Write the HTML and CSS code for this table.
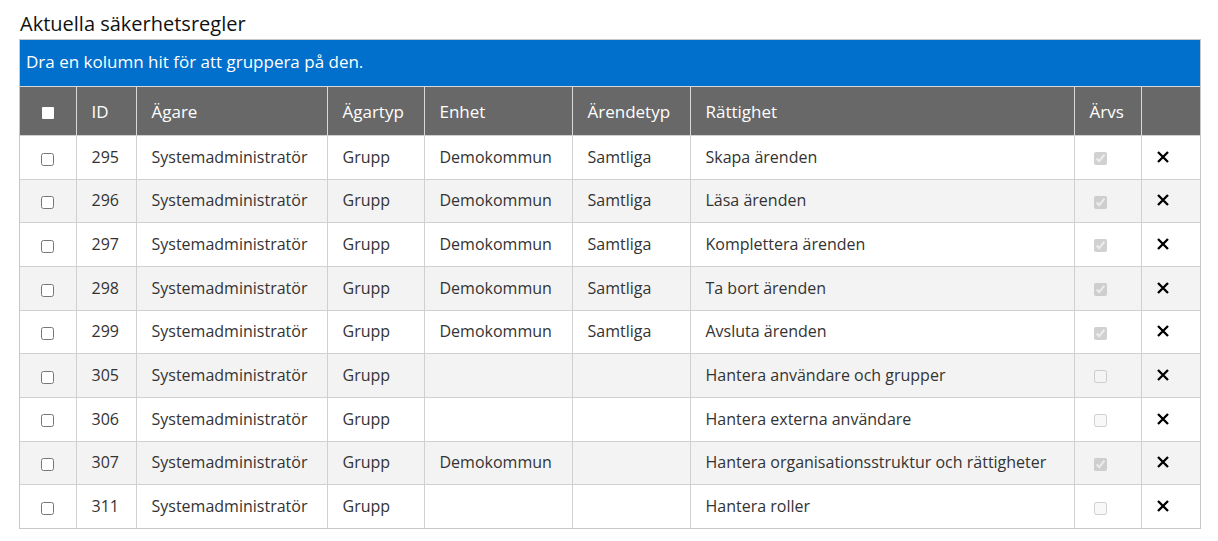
FILE: index.html
```html
<!DOCTYPE html>
<html lang="sv">
<head>
<meta charset="utf-8">
<title>Aktuella säkerhetsregler</title>
<link rel="stylesheet" href="styles.css">
</head>
<body>
<div class="page">
  <h2 class="title">Aktuella säkerhetsregler</h2>
  <div class="grid">
    <div class="group-bar">Dra en kolumn hit för att gruppera på den.</div>
    <table class="rules">
      <colgroup>
        <col class="c-sel"><col class="c-id"><col class="c-owner"><col class="c-otype"><col class="c-unit"><col class="c-ctype"><col class="c-right"><col class="c-inh"><col class="c-del">
      </colgroup>
      <thead>
        <tr>
          <th class="sel"><span class="head-box"></span></th>
          <th>ID</th>
          <th>Ägare</th>
          <th>Ägartyp</th>
          <th>Enhet</th>
          <th>Ärendetyp</th>
          <th>Rättighet</th>
          <th>Ärvs</th>
          <th></th>
        </tr>
      </thead>
      <tbody>
        <tr><td class="sel"><input type="checkbox"></td><td>295</td><td>Systemadministratör</td><td>Grupp</td><td>Demokommun</td><td>Samtliga</td><td>Skapa ärenden</td><td class="inh"><input type="checkbox" checked disabled></td><td class="del"><svg class="x" viewBox="0 0 12 12"><path d="M1 1L11 11M11 1L1 11"/></svg></td></tr>
        <tr><td class="sel"><input type="checkbox"></td><td>296</td><td>Systemadministratör</td><td>Grupp</td><td>Demokommun</td><td>Samtliga</td><td>Läsa ärenden</td><td class="inh"><input type="checkbox" checked disabled></td><td class="del"><svg class="x" viewBox="0 0 12 12"><path d="M1 1L11 11M11 1L1 11"/></svg></td></tr>
        <tr><td class="sel"><input type="checkbox"></td><td>297</td><td>Systemadministratör</td><td>Grupp</td><td>Demokommun</td><td>Samtliga</td><td>Komplettera ärenden</td><td class="inh"><input type="checkbox" checked disabled></td><td class="del"><svg class="x" viewBox="0 0 12 12"><path d="M1 1L11 11M11 1L1 11"/></svg></td></tr>
        <tr><td class="sel"><input type="checkbox"></td><td>298</td><td>Systemadministratör</td><td>Grupp</td><td>Demokommun</td><td>Samtliga</td><td>Ta bort ärenden</td><td class="inh"><input type="checkbox" checked disabled></td><td class="del"><svg class="x" viewBox="0 0 12 12"><path d="M1 1L11 11M11 1L1 11"/></svg></td></tr>
        <tr><td class="sel"><input type="checkbox"></td><td>299</td><td>Systemadministratör</td><td>Grupp</td><td>Demokommun</td><td>Samtliga</td><td>Avsluta ärenden</td><td class="inh"><input type="checkbox" checked disabled></td><td class="del"><svg class="x" viewBox="0 0 12 12"><path d="M1 1L11 11M11 1L1 11"/></svg></td></tr>
        <tr><td class="sel"><input type="checkbox"></td><td>305</td><td>Systemadministratör</td><td>Grupp</td><td></td><td></td><td>Hantera användare och grupper</td><td class="inh"><input type="checkbox" disabled></td><td class="del"><svg class="x" viewBox="0 0 12 12"><path d="M1 1L11 11M11 1L1 11"/></svg></td></tr>
        <tr><td class="sel"><input type="checkbox"></td><td>306</td><td>Systemadministratör</td><td>Grupp</td><td></td><td></td><td>Hantera externa användare</td><td class="inh"><input type="checkbox" disabled></td><td class="del"><svg class="x" viewBox="0 0 12 12"><path d="M1 1L11 11M11 1L1 11"/></svg></td></tr>
        <tr><td class="sel"><input type="checkbox"></td><td>307</td><td>Systemadministratör</td><td>Grupp</td><td>Demokommun</td><td></td><td>Hantera organisationsstruktur och rättigheter</td><td class="inh"><input type="checkbox" checked disabled></td><td class="del"><svg class="x" viewBox="0 0 12 12"><path d="M1 1L11 11M11 1L1 11"/></svg></td></tr>
        <tr><td class="sel"><input type="checkbox"></td><td>311</td><td>Systemadministratör</td><td>Grupp</td><td></td><td></td><td>Hantera roller</td><td class="inh"><input type="checkbox" disabled></td><td class="del"><svg class="x" viewBox="0 0 12 12"><path d="M1 1L11 11M11 1L1 11"/></svg></td></tr>
      </tbody>
    </table>
  </div>
</div>
</body>
</html>
```

FILE: styles.css
```css
html, body {
  margin: 0;
  padding: 0;
  background: #ffffff;
}

body {
  font-family: "Open Sans", "Noto Sans", "Liberation Sans", sans-serif;
  color: #333333;
}

.page {
  padding: 10px 17px 0 19px;
}

.title {
  margin: 0 0 2px 1px;
  font-size: 20px;
  font-weight: 400;
  line-height: 27px;
  color: #111111;
}

.grid {
  width: 1182px;
  border: 1px solid #c8c8c8;
  box-sizing: border-box;
}

.group-bar {
  background: #0070cc;
  color: #ffffff;
  font-size: 17px;
  height: 46px;
  line-height: 44px;
  padding-left: 6px;
  border-bottom: 1px solid #d8d8d8;
}

.rules {
  width: 100%;
  table-layout: fixed;
  border-collapse: collapse;
  font-size: 16px;
}

.c-sel { width: 56px; }
.c-id { width: 60px; }
.c-owner { width: 191px; }
.c-otype { width: 97px; }
.c-unit { width: 148px; }
.c-ctype { width: 118px; }
.c-right { width: 384px; }
.c-inh { width: 67px; }
.c-del { width: 59px; }

.rules th {
  background: #686868;
  color: #ffffff;
  font-weight: 400;
  font-size: 17px;
  text-align: left;
  height: 48px;
  padding: 0 0 0 15px;
  border-left: 1px solid #d8d8d8;
}

.rules th:first-child,
.rules td:first-child {
  border-left: none;
}

.rules td {
  height: 43.67px;
  padding: 0 0 1px 15px;
  border-left: 1px solid #d0d0d0;
  border-top: 1px solid #d0d0d0;
  white-space: nowrap;
  box-sizing: border-box;
}

.rules tbody tr:nth-child(even) td {
  background: #f3f3f3;
}

.rules .sel {
  padding: 0;
  text-align: center;
}

.head-box {
  display: inline-block;
  width: 12px;
  height: 12px;
  background: #ffffff;
  border-radius: 1px;
  vertical-align: middle;
}

.rules input[type="checkbox"] {
  margin: 0;
  width: 13px;
  height: 13px;
  vertical-align: middle;
}

.rules .inh {
  padding-left: 19px;
}

.rules .del {
  padding-left: 15px;
}

.x {
  display: block;
  width: 12px;
  height: 12px;
  stroke: #000000;
  stroke-width: 2.3;
  fill: none;
}
```
